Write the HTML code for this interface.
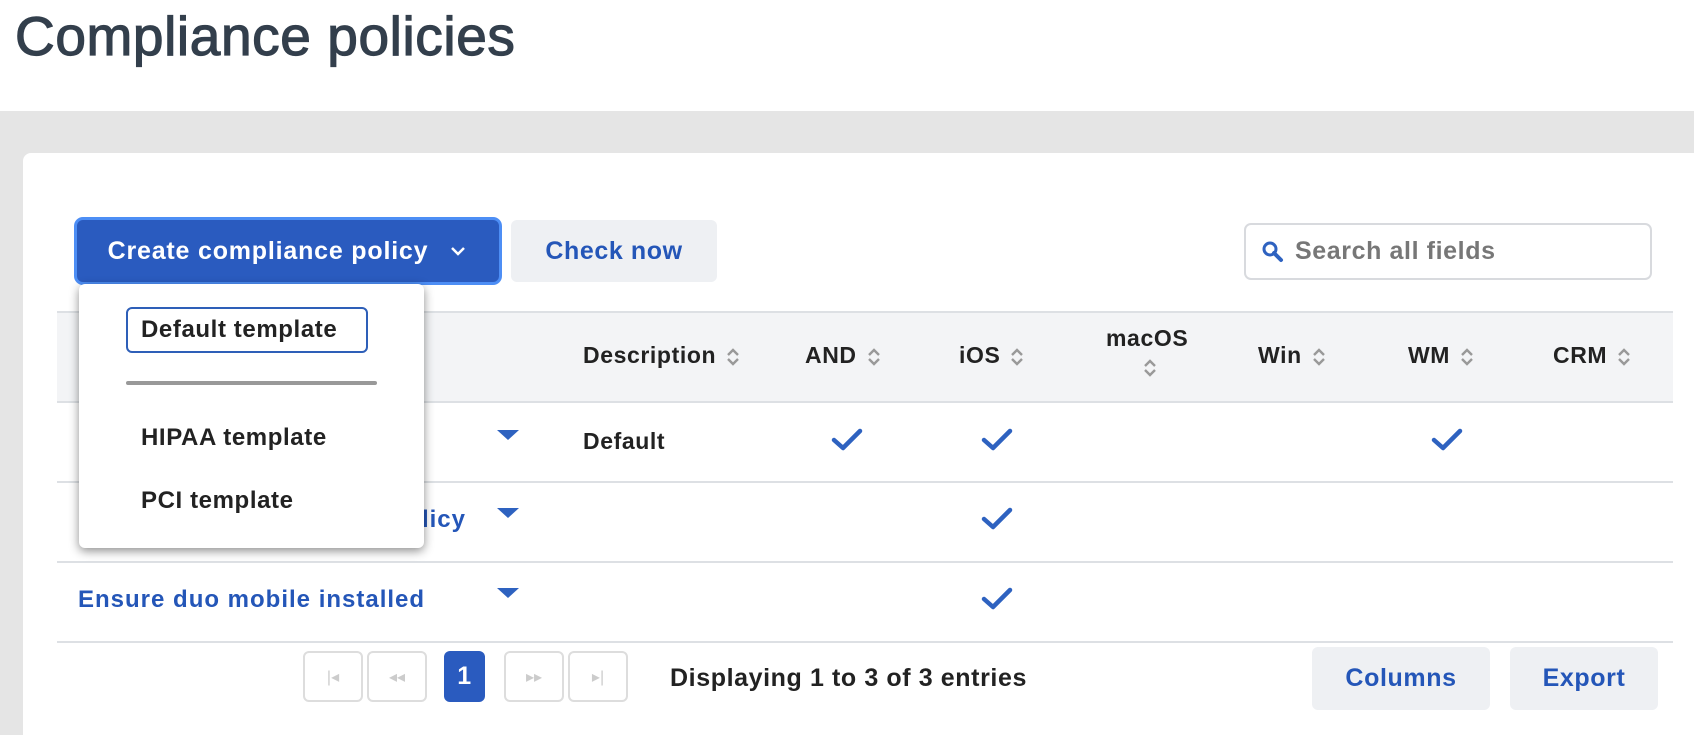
<!DOCTYPE html>
<html><head><meta charset="utf-8"><style>
*{margin:0;padding:0;box-sizing:border-box}
body{width:1694px;height:735px;overflow:hidden;background:#fff;font-family:"Liberation Sans",sans-serif;position:relative;color:#222;letter-spacing:0.6px}
.a{position:absolute}
h1{position:absolute;left:15px;top:4px;font-size:55px;font-weight:400;color:#333f4c;-webkit-text-stroke:1.2px #333f4c;letter-spacing:0.6px}
.gray{left:0;top:111px;width:1694px;height:624px;background:#e5e5e5}
.card{left:23px;top:153px;width:1680px;height:600px;background:#fff;border-radius:8px}
.btn{display:flex;align-items:center;justify-content:center;font-weight:700;border-radius:6px}
.hd{font-weight:700;font-size:23px;color:#222}
.sort{display:inline-block;width:14px;height:20px;vertical-align:middle;margin-left:10px}
.row{left:57px;width:1616px;height:2px;background:#dde0e4}
.pg{border:2px solid #ddd;border-radius:6px;width:60px;height:51px;color:#ccc;font-size:16px;display:flex;align-items:center;justify-content:center;letter-spacing:0}
.tri{width:0;height:0;border-left:11px solid transparent;border-right:11px solid transparent;border-top:10px solid #2e62c0}
</style></head><body>
<h1>Compliance policies</h1>
<div class="a gray"></div>
<div class="a card"></div>

<div class="a" style="left:57px;top:311px;width:1616px;height:92px;background:#f3f4f6;border-top:2px solid #dde0e4;border-bottom:2px solid #dde0e4"></div>
<div class="a row" style="top:481px"></div>
<div class="a row" style="top:561px"></div>
<div class="a row" style="top:641px"></div>

<svg width="0" height="0" style="position:absolute"><defs>
<symbol id="s" viewBox="0 0 14 20"><path d="M2 8 L7 3 L12 8 M2 12 L7 17 L12 12" fill="none" stroke="#999" stroke-width="2.4"/></symbol>
<symbol id="c" viewBox="0 0 32 24"><path d="M3 12 L12 20 L29 3" fill="none" stroke="#2e62c0" stroke-width="4.5" stroke-linecap="round" stroke-linejoin="round"/></symbol>
</defs></svg>

<div class="a hd" style="left:583px;top:342px">Description<svg class="sort"><use href="#s"/></svg></div>
<div class="a hd" style="left:805px;top:342px">AND<svg class="sort"><use href="#s"/></svg></div>
<div class="a hd" style="left:959px;top:342px">iOS<svg class="sort"><use href="#s"/></svg></div>
<div class="a hd" style="left:1106px;top:325px">macOS</div>
<svg class="a" style="left:1143px;top:358px" width="14" height="20"><use href="#s"/></svg>
<div class="a hd" style="left:1258px;top:342px">Win<svg class="sort"><use href="#s"/></svg></div>
<div class="a hd" style="left:1408px;top:342px">WM<svg class="sort"><use href="#s"/></svg></div>
<div class="a hd" style="left:1553px;top:342px">CRM<svg class="sort"><use href="#s"/></svg></div>

<div class="a hd" style="left:583px;top:428px">Default</div>
<svg class="a" style="left:831px;top:428px" width="32" height="24"><use href="#c"/></svg>
<svg class="a" style="left:981px;top:428px" width="32" height="24"><use href="#c"/></svg>
<svg class="a" style="left:1431px;top:428px" width="32" height="24"><use href="#c"/></svg>
<svg class="a" style="left:981px;top:507px" width="32" height="24"><use href="#c"/></svg>
<svg class="a" style="left:981px;top:587px" width="32" height="24"><use href="#c"/></svg>
<div class="a tri" style="left:497px;top:430px"></div>
<div class="a tri" style="left:497px;top:508px"></div>
<div class="a tri" style="left:497px;top:588px"></div>
<div class="a" style="left:78px;top:506px;font-weight:700;font-size:24px;color:#2456b8;width:388px;text-align:right;letter-spacing:1px">Ensure some policy</div>
<div class="a" style="left:78px;top:586px;font-weight:700;font-size:24px;color:#2456b8;letter-spacing:1px">Ensure duo mobile installed</div>

<div class="a btn" style="left:74px;top:217px;width:428px;height:68px;background:#2a5bbf;border:3px solid #4d8ef5;border-radius:9px;color:#fff;font-size:25px;letter-spacing:0.8px">Create compliance policy<svg width="20" height="14" style="margin-left:20px"><path d="M4 4 L10 10 L16 4" fill="none" stroke="#fff" stroke-width="2.5"/></svg></div>
<div class="a btn" style="left:511px;top:220px;width:206px;height:62px;background:#eef0f3;color:#2456b8;font-size:25px">Check now</div>
<div class="a" style="left:1244px;top:223px;width:408px;height:57px;border:2px solid #d8dade;border-radius:7px;display:flex;align-items:center;padding-left:15px;color:#777;font-size:25px;font-weight:700">
<svg width="24" height="24" style="margin-right:10px"><circle cx="9" cy="9" r="6" fill="none" stroke="#2e62c0" stroke-width="3"/><path d="M13 13 L20 20" stroke="#2e62c0" stroke-width="4" stroke-linecap="round"/></svg>Search all fields</div>

<div class="a" style="left:79px;top:284px;width:345px;height:264px;background:#fff;border-radius:6px;box-shadow:0 3px 10px rgba(0,0,0,.45)"></div>
<div class="a" style="left:126px;top:307px;width:242px;height:46px;border:2px solid #2e5fb8;border-radius:6px;display:flex;align-items:center;padding-left:13px;font-weight:700;font-size:24px;color:#222">Default template</div>
<div class="a" style="left:126px;top:381px;width:251px;height:4px;background:#999;border-radius:2px"></div>
<div class="a" style="left:141px;top:424px;font-weight:700;font-size:24px;color:#222">HIPAA template</div>
<div class="a" style="left:141px;top:487px;font-weight:700;font-size:24px;color:#222">PCI template</div>

<div class="a pg" style="left:303px;top:651px">|◂</div>
<div class="a pg" style="left:367px;top:651px">◂◂</div>
<div class="a btn" style="left:444px;top:651px;width:41px;height:51px;background:#2a5bbf;color:#fff;font-size:25px">1</div>
<div class="a pg" style="left:504px;top:651px">▸▸</div>
<div class="a pg" style="left:568px;top:651px">▸|</div>
<div class="a" style="left:670px;top:664px;font-weight:700;font-size:25px;color:#222">Displaying 1 to 3 of 3 entries</div>
<div class="a btn" style="left:1312px;top:647px;width:178px;height:63px;background:#eef0f3;color:#2456b8;font-size:25px">Columns</div>
<div class="a btn" style="left:1510px;top:647px;width:148px;height:63px;background:#eef0f3;color:#2456b8;font-size:25px">Export</div>
</body></html>
